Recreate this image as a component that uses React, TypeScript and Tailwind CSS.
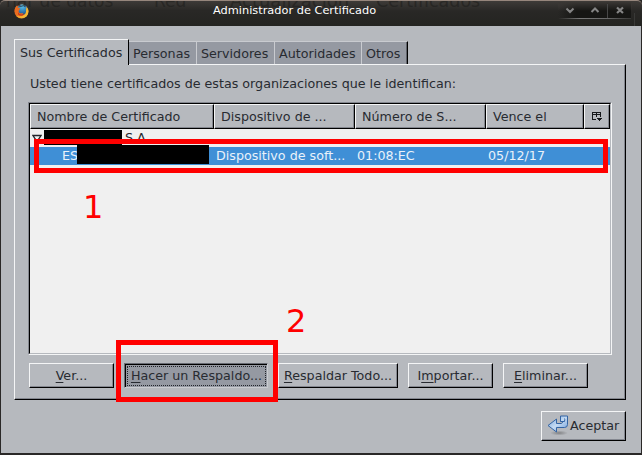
import type { ReactNode } from 'react';

const raised =
  'border border-t-[#f4f5f6] border-l-[#f4f5f6] border-r-black border-b-black shadow-[inset_-1px_-1px_0_#84878f] bg-[#b6b9be]';

function Tab({ children, width, last }: { children: ReactNode; width: string; last?: boolean }) {
  return (
    <div
      className={`mt-[2px] h-[23px] shrink-0 whitespace-nowrap border-t border-t-[#c9cbd0] bg-[#9599a2] pl-[4px] pt-[4px] leading-[16px] ${width} ${
        last ? 'border-r border-r-black shadow-[inset_-1px_0_0_#5f626a]' : 'border-r border-r-[#c9cbd0]'
      }`}
    >
      {children}
    </div>
  );
}

function HeaderCell({ children, width }: { children: ReactNode; width: string }) {
  return (
    <div
      className={`h-[25px] shrink-0 overflow-hidden whitespace-nowrap pl-[6px] pt-[4px] leading-[16px] ${raised} ${width}`}
    >
      {children}
    </div>
  );
}

function Button({ accel, children, width }: { accel: string; children: ReactNode; width: string }) {
  const at = String(children).indexOf(accel);
  const text = String(children);
  return (
    <button
      className={`flex h-[25px] shrink-0 items-center justify-center whitespace-nowrap leading-[16px] ${raised} ${width}`}
    >
      <span>
        {text.slice(0, at)}
        <u className="underline decoration-1 underline-offset-2">{accel}</u>
        {text.slice(at + 1)}
      </span>
    </button>
  );
}

function Firefox() {
  return (
    <svg width="15" height="15" viewBox="0 0 15 15">
      <defs>
        <linearGradient id="fox" x1="0" y1="0" x2="1" y2="1">
          <stop offset="0" stopColor="#d9541e" />
          <stop offset="0.55" stopColor="#ee7a20" />
          <stop offset="1" stopColor="#f8cf45" />
        </linearGradient>
        <radialGradient id="globe" cx="0.5" cy="0.2" r="0.8">
          <stop offset="0" stopColor="#5cc0ea" />
          <stop offset="1" stopColor="#16508f" />
        </radialGradient>
      </defs>
      <circle cx="7.5" cy="7.5" r="7" fill="url(#fox)" />
      <circle cx="8.2" cy="5.7" r="5.4" fill="url(#globe)" />
      <path d="M.6 7.5C.5 4.500 1.500 2.500 3 1.500L3.600 3.400 6 4 5.200 6 4.600 7.200C5 9.400 7.500 9.800 9.200 8.900 9 11 6.500 11.800 4 10.500Z" fill="#ea6c20" />
      <path d="M12.600 3C14.600 5 15 8.500 13.200 11.200 10.500 14.800 5 14.800 2.500 11.800 6 13.400 11.500 12 12 7.500 12.200 6 12 4.500 12.600 3Z" fill="#f6b934" />
      <path d="M4.200 8C5 10.800 8 11 10.400 9.400 9.600 12 6 12.400 4 10.500Z" fill="#c93a1c" />
    </svg>
  );
}

function WindowControls() {
  return (
    <svg width="86" height="26" viewBox="0 0 86 26">
      <defs>
        <linearGradient id="well" x1="0" y1="0" x2="1" y2="0">
          <stop offset="0" stopColor="#161614" stopOpacity="0" />
          <stop offset="0.25" stopColor="#161614" />
        </linearGradient>
        <linearGradient id="rim" x1="0" y1="0" x2="1" y2="0">
          <stop offset="0" stopColor="#777" stopOpacity="0" />
          <stop offset="0.3" stopColor="#777" />
          <stop offset="0.7" stopColor="#666" />
          <stop offset="1" stopColor="#555" stopOpacity="0.4" />
        </linearGradient>
        <linearGradient id="fade" x1="0" y1="0" x2="0" y2="1">
          <stop offset="0" stopColor="#3a3734" />
          <stop offset="1" stopColor="#3a3734" stopOpacity="0" />
        </linearGradient>
      </defs>
      <rect x="2" y="2" width="73" height="16" fill="url(#well)" />
      <rect x="2" y="2" width="74" height="9" fill="url(#fade)" />
      <rect x="2" y="18" width="73" height="1" fill="url(#rim)" />
      <rect x="51" y="4" width="1" height="14" fill="#474747" />
      <rect x="78" y="13" width="1" height="13" fill="#393937" />
      <path d="M10.500 8.500L14 12 17.500 8.500M35.500 12L39 8.500 42.500 12" fill="none" stroke="#858585" strokeWidth="2" />
      <path d="M61 7.500L67 13M67 7.500L61 13" fill="none" stroke="#858585" strokeWidth="2.200" />
    </svg>
  );
}

function AcceptArrow() {
  return (
    <svg width="22" height="22" viewBox="0 0 22 22" className="shrink-0">
      <defs>
        <linearGradient id="blue" x1="0" y1="0" x2="1" y2="1">
          <stop offset="0" stopColor="#6f9fda" />
          <stop offset="0.5" stopColor="#c4daf2" />
          <stop offset="1" stopColor="#6c9cd8" />
        </linearGradient>
        <radialGradient id="shade">
          <stop offset="0" stopColor="#555" stopOpacity="0.55" />
          <stop offset="1" stopColor="#555" stopOpacity="0" />
        </radialGradient>
      </defs>
      <ellipse cx="12" cy="18" rx="9" ry="2.500" fill="url(#shade)" />
      <path
        d="M13.500 1H20.500V9.500Q20.500 12.500 17.500 12.500H9.500V17L1 10.500 9.500 4V8.500H14.500Q15.500 8.500 15.500 6.500H13.500Z"
        fill="url(#blue)"
        stroke="#3465a4"
      />
      <path d="M13.500 6.500H17.500Q18 4 17.500 3.500" fill="none" stroke="#3465a4" />
    </svg>
  );
}

function ColumnPicker() {
  return (
    <svg width="11" height="10" viewBox="0 0 11 10">
      <path d="M.5 8V.5H8.500V5M0 2.500H9M4.500 0V5M0 7.500H4" fill="none" stroke="#15171a" shapeRendering="crispEdges" />
      <path d="M5 6H10V7H9V8H8V9H7V8H6V7H5Z" fill="#15171a" shapeRendering="crispEdges" />
    </svg>
  );
}

export default function App() {
  return (
    <div className="relative flex h-[455px] w-[642px] flex-col overflow-hidden bg-[#2a2827] font-['DejaVu_Sans',sans-serif] text-[12.7px] text-[#282b31]">
      <header className="relative flex h-[26px] shrink-0 items-start overflow-hidden rounded-t-[5px] border-t border-t-[#96867c] bg-linear-to-b from-[#3e3b38] via-[#292826] via-40% to-[#242421] text-white">
        <div className="absolute left-0 top-[-9px] h-[18px] w-full whitespace-pre text-[17px] leading-[18px] text-[#1f1e1c] opacity-60">
          <span className="absolute left-[6px]">nar de datos</span>
          <span className="absolute left-[154px]">Red</span>
          <span className="absolute left-[230px] text-[18px]">Actualización</span>
          <span className="absolute left-[376px] text-[17.500px]">Certificados</span>
        </div>
        <div className="ml-[14px] mt-[3px] w-[15px]">
          <Firefox />
        </div>
        <h1 className="relative ml-[184px] mt-[1px] w-[345px] whitespace-nowrap text-[11.350px] leading-[16px]">
          Administrador de Certificado
        </h1>
        <div className="absolute right-0 top-[-1px]">
          <WindowControls />
        </div>
      </header>

      <main className="ml-px mr-px flex h-[427px] shrink-0 flex-col bg-[#b6b9be] pl-[13px] pr-[15px] pt-[13px]">
        <nav className="flex h-[25px] shrink-0">
          <div className="relative z-10 h-[26px] w-[115px] shrink-0 whitespace-nowrap border-l border-r border-t border-l-[#f4f5f6] border-r-black border-t-[#f4f5f6] bg-[#b6b9be] pl-[5px] pt-[5px] leading-[16px]">
            Sus Certificados
          </div>
          <Tab width="w-[68px]">Personas</Tab>
          <Tab width="w-[78px]">Servidores</Tab>
          <Tab width="w-[87px]">Autoridades</Tab>
          <Tab width="w-[46px]" last>
            Otros
          </Tab>
        </nav>

        <section className={`flex h-[336px] w-[612px] shrink-0 flex-col pl-[13px] pt-[11px] ${raised}`}>
          <p className="h-[26px] whitespace-nowrap pl-[2px] leading-[16px]">
            Usted tiene certificados de estas organizaciones que le identifican:
          </p>

          <div className="h-[253px] w-[584px] shrink-0 border border-b-[#f4f5f6] border-l-[#84878f] border-r-[#f4f5f6] border-t-[#84878f]">
            <div className="h-[251px] border border-b-[#b6b9be] border-l-black border-r-[#b6b9be] border-t-black bg-[#f0f0f0]">
              <div className="flex">
                <HeaderCell width="w-[184px]">Nombre de Certificado</HeaderCell>
                <HeaderCell width="w-[141px]">Dispositivo de ...</HeaderCell>
                <HeaderCell width="w-[131px]">Número de S...</HeaderCell>
                <HeaderCell width="w-[98px]">Vence el</HeaderCell>
                <HeaderCell width="w-[26px]">
                  <span className="block pl-px pt-[3px]">
                    <ColumnPicker />
                  </span>
                </HeaderCell>
              </div>
              <div className="flex h-[18px] items-start">
                <svg width="10" height="9" viewBox="0 0 10 9" className="ml-[2px] mt-[5px]">
                  <path d="M1 1.500H9L5 7.500Z" fill="none" stroke="#22252b" strokeWidth="1.300" />
                </svg>
                <div className="ml-[2px] mt-px h-[15px] w-[78px] bg-black" />
                <span className="ml-[3px] leading-[18px]">S.A.</span>
              </div>
              <div className="flex h-[18px] items-start bg-[#3f8fd6] leading-[18px] text-[#eaf2fa]">
                <span className="w-[47px] pl-[32px]">ES</span>
                <div className="-mt-[2px] h-[19px] w-[132px] bg-black" />
                <span className="w-[141px] whitespace-nowrap pl-[7px]">Dispositivo de soft...</span>
                <span className="w-[131px] pl-[7px]">01:08:EC</span>
                <span className="pl-[7px]">05/12/17</span>
              </div>
            </div>
          </div>

          <div className="ml-px mt-[8px] flex">
            <Button accel="V" width="w-[85px]">Ver...</Button>
            <button className="ml-[10px] flex h-[25px] w-[144px] shrink-0 border border-b-[#c9cbd0] border-l-[#686b73] border-r-[#c9cbd0] border-t-[#686b73] bg-[#9599a2] leading-[16px]">
              <span className="flex h-[23px] w-full items-center justify-center border-l border-t border-black p-px">
                <span className="flex h-[20px] w-full items-center justify-center whitespace-nowrap border border-dotted border-[#22252b]">
                  <span>
                    <u className="underline decoration-1 underline-offset-2">H</u>acer un Respaldo...
                  </span>
                </span>
              </span>
            </button>
            <div className="ml-[10px] flex gap-[10px]">
              <Button accel="R" width="w-[120px]">Respaldar Todo...</Button>
              <Button accel="m" width="w-[85px]">Importar...</Button>
              <Button accel="E" width="w-[85px]">Eliminar...</Button>
            </div>
          </div>
        </section>

        <button
          className={`mt-[11px] flex h-[30px] w-[85px] shrink-0 items-center self-end pl-[5px] leading-[16px] ${raised}`}
        >
          <AcceptArrow />
          <span className="ml-px">Aceptar</span>
        </button>
      </main>

      <div className="absolute left-[34px] top-[139px] h-[34px] w-[574px] border-[5px] border-[#ff0000]" />
      <div className="absolute left-[116px] top-[340px] h-[62px] w-[162px] border-[5px] border-[#ff0000]" />
      <span className="absolute left-[83px] top-[189px] text-[32px] leading-[37px] text-[#ff0000]">1</span>
      <span className="absolute left-[286px] top-[303px] text-[32px] leading-[37px] text-[#ff0000]">2</span>
    </div>
  );
}
